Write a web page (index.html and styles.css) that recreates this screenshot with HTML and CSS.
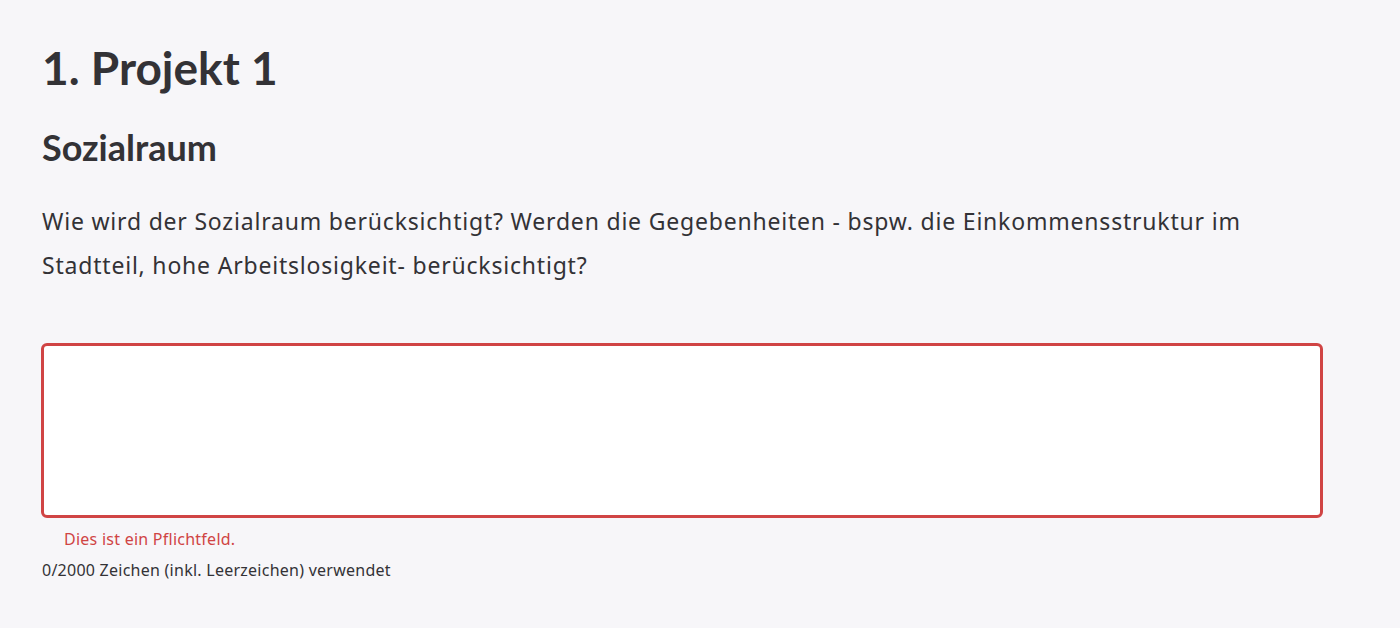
FILE: index.html
```html
<!DOCTYPE html>
<html lang="de">
<head>
<meta charset="utf-8">
<link rel="stylesheet" href="styles.css">
</head>
<body>
<main class="page">
  <h1 class="title">1. Projekt 1</h1>
  <h2 class="subtitle">Sozialraum</h2>
  <p class="question">Wie wird der Sozialraum berücksichtigt? Werden die Gegebenheiten - bspw. die Einkommensstruktur im Stadtteil, hohe Arbeitslosigkeit- berücksichtigt?</p>
  <div class="field">
    <textarea class="input" aria-label="Sozialraum"></textarea>
    <div class="error">Dies ist ein Pflichtfeld.</div>
    <div class="counter">0/2000 Zeichen (inkl. Leerzeichen) verwendet</div>
  </div>
</main>
</body>
</html>
```
FILE: styles.css
```css
html, body {
  margin: 0;
  padding: 0;
  background: #f7f6f9;
}
.page {
  font-family: "Noto Sans", "Open Sans", sans-serif;
  color: #333236;
  padding: 36px 77px 0 42px;
}
.title {
  margin: 0;
  font-family: "Lato", "Noto Sans", sans-serif;
  font-size: 46px;
  font-weight: 700;
  line-height: 64px;
}
.subtitle {
  margin: 27px 0 0;
  font-family: "Lato", "Noto Sans", sans-serif;
  font-size: 36px;
  font-weight: 700;
  line-height: 40px;
}
.question {
  margin: 32px 0 0;
  font-size: 23px;
  letter-spacing: 0.8px;
  line-height: 44px;
  max-width: 1250px;
}
.field {
  margin-top: 56px;
  display: flex;
  flex-direction: column;
}
.input {
  box-sizing: border-box;
  width: 1282px;
  height: 175px;
  margin: 0 0 0 -1px;
  border: 3px solid #d04444;
  border-radius: 6px;
  background: #fff;
  resize: none;
  display: block;
}
.error {
  margin: 10px 0 0 22px;
  color: #d04444;
  font-size: 16px;
  letter-spacing: 0.25px;
  line-height: 22px;
}
.counter {
  margin-top: 10px;
  font-size: 16px;
  letter-spacing: 0.25px;
  line-height: 20px;
}
```
